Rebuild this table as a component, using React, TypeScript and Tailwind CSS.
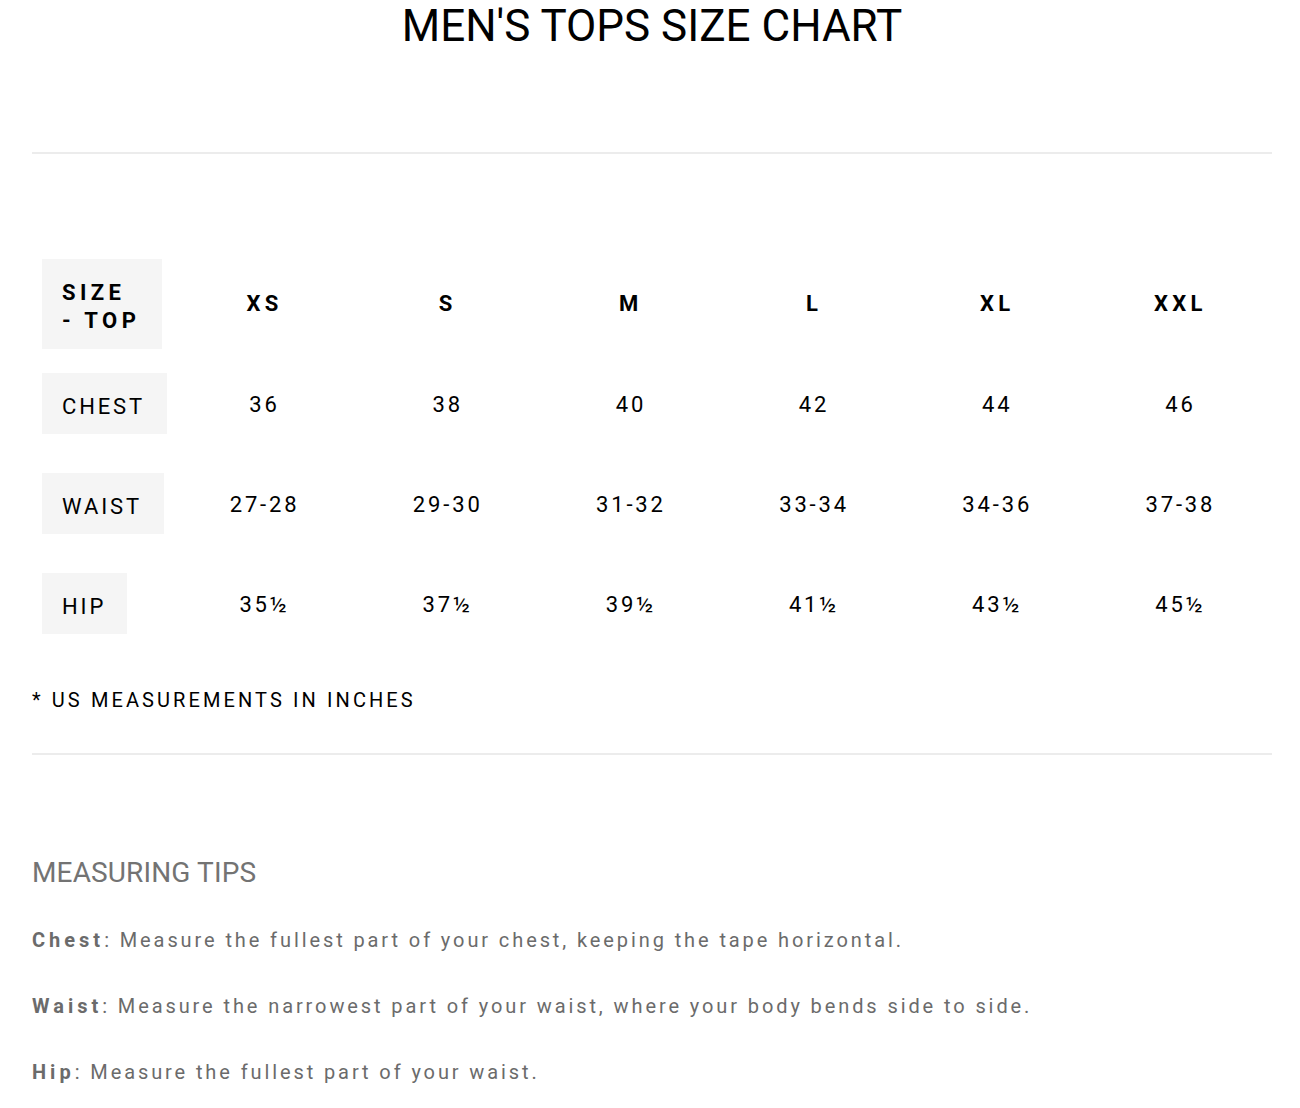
import React from "react";

const sizes = ["XS", "S", "M", "L", "XL", "XXL"];
const rows: { label: string; w: string; values: string[] }[] = [
  { label: "CHEST", w: "w-[125px]", values: ["36", "38", "40", "42", "44", "46"] },
  { label: "WAIST", w: "w-[122px]", values: ["27-28", "29-30", "31-32", "33-34", "34-36", "37-38"] },
  { label: "HIP", w: "w-[85px]", values: ["35½", "37½", "39½", "41½", "43½", "45½"] },
];

export default function App() {
  return (
    <div
      className="w-[1300px] min-h-[1108px] bg-white pl-[32px] pr-[28px] text-black"
      style={{ fontFamily: "Roboto, 'Liberation Sans', sans-serif" }}
    >
      <h1 className="text-center text-[44px] leading-[1.2] font-normal">MEN'S TOPS SIZE CHART</h1>
      <div className="mt-[99px] h-[2px] bg-[#ececec]" />

      <div className="mt-[100px] w-[1240px]">
        <div className="grid h-[100px] grid-cols-[141px_repeat(6,1fr)] items-center">
          <div className="pl-[10px]">
            <div className="flex h-[90px] w-[120px] flex-col justify-center bg-[#f5f5f5] pl-[20px] pt-[7px] text-[22px] leading-[28px] font-bold tracking-[0.2em]">
              <span>SIZE</span>
              <span>- TOP</span>
            </div>
          </div>
          {sizes.map((s) => (
            <div key={s} className="text-center text-[22px] font-bold tracking-[0.2em]">
              {s}
            </div>
          ))}
        </div>
        {rows.map((r) => (
          <div key={r.label} className="grid h-[100px] grid-cols-[141px_repeat(6,1fr)] items-center">
            <div className="pl-[10px]">
              <div
                className={`flex h-[61px] ${r.w} items-center bg-[#f5f5f5] pl-[20px] pt-[5px] text-[22px] tracking-[0.13em]`}
              >
                {r.label}
              </div>
            </div>
            {r.values.map((v, i) => (
              <div key={i} className="pt-[2px] text-center text-[22px] tracking-[0.13em]">
                {v}
              </div>
            ))}
          </div>
        ))}
      </div>

      <p className="mt-[32px] text-[20px] leading-[28px] tracking-[0.155em]">* US MEASUREMENTS IN INCHES</p>
      <div className="mt-[39px] h-[2px] bg-[#ececec]" />

      <h2 className="mt-[101px] text-[28px] leading-[34px] text-[#737373] tracking-[0.005em]">MEASURING TIPS</h2>
      <div className="mt-[36px] flex flex-col gap-[38px] text-[20px] leading-[28px] tracking-[0.145em] text-[#6b6b6b]">
        <p>
          <b className="font-bold tracking-[0.2em]">Chest</b>: Measure the fullest part of your chest, keeping the tape horizontal.
        </p>
        <p>
          <b className="font-bold tracking-[0.2em]">Waist</b>: Measure the narrowest part of your waist, where your body bends side to side.
        </p>
        <p>
          <b className="font-bold tracking-[0.2em]">Hip</b>: Measure the fullest part of your waist.
        </p>
      </div>
    </div>
  );
}
